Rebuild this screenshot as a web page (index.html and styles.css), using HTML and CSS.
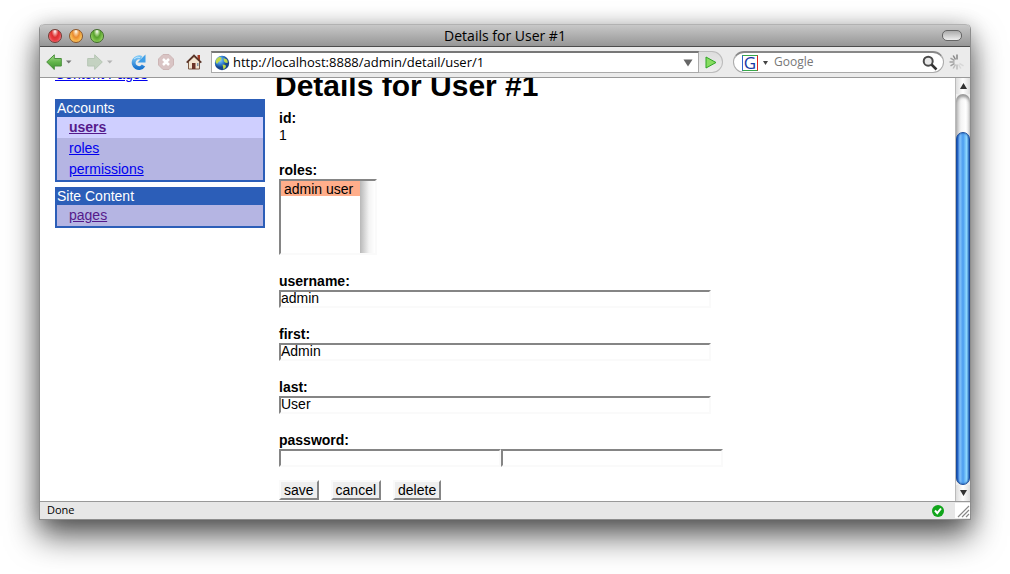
FILE: index.html
```html
<!DOCTYPE html>
<html lang="en">
<head>
<meta charset="utf-8">
<meta name="viewport" content="width=device-width, initial-scale=1">
<title>Details for User #1</title>
<link rel="stylesheet" href="styles.css">
</head>
<body>
<div class="window">
  <header class="titlebar">
    <div class="lights">
      <button class="light red" aria-label="Close"></button>
      <button class="light amber" aria-label="Minimize"></button>
      <button class="light green" aria-label="Zoom"></button>
    </div>
    <div class="title">Details for User #1</div>
    <button class="pill" aria-label="Toggle toolbar"></button>
  </header>

  <nav class="toolbar" aria-label="Navigation">
    <button class="tool arrow" aria-label="Back">
      <svg width="26" height="16" viewBox="0 0 26 16"><defs><linearGradient id="gr" x2="0" y2="1"><stop stop-color="#a5dc8a"/><stop offset=".5" stop-color="#63b54b"/><stop offset="1" stop-color="#3d9130"/></linearGradient></defs><path d="M.7 8 8.300.8V4.500h7v7.500h-7v3.500z" fill="url(#gr)" stroke="#4c8f3e"/><path d="M20 6.500h5.500l-2.750 3z" fill="#777"/></svg>
    </button>
    <button class="tool arrow faded" aria-label="Forward">
      <svg width="26" height="16" viewBox="0 0 26 16"><path d="M15.300 8 7.700.8V4.500h-7v7.500h7v3.500z" fill="#a5bea0" stroke="#8ca888"/><path d="M20 6.500h5.500l-2.750 3z" fill="#888"/></svg>
    </button>
    <button class="tool reload" aria-label="Reload">
      <svg width="16" height="16" viewBox="0 0 16 16"><defs><linearGradient id="bl" x2="0" y2="1"><stop stop-color="#77c4f4"/><stop offset="1" stop-color="#1c76d0"/></linearGradient></defs><path d="M11.500 4A5.300 5.300 0 1 0 13.500 11.500" fill="none" stroke="url(#bl)" stroke-width="4"/><path d="M15.500.5v8H7.500z" fill="#3f9fe8"/><path d="M4 5Q7 2 10 3.500" fill="none" stroke="#bfe6ff"/></svg>
    </button>
    <button class="tool stop" aria-label="Stop">
      <svg width="16" height="16" viewBox="0 0 16 16"><path d="M5 .5h6L15.500 5v6L11 15.500H5L.5 11V5z" fill="#d9c4c4" stroke="#cdb6b6"/><path d="m5 5 6 6m0-6-6 6" stroke="#fff" stroke-width="2.500"/></svg>
    </button>
    <button class="tool home" aria-label="Home">
      <svg width="16" height="16" viewBox="0 0 16 16"><path d="M11.500 1H14v5h-2.500z" fill="#a33b25"/><path d="M2.500 7.500 8 2.500l5.500 5v7.500h-11z" fill="#f3e5cf" stroke="#7d5b46"/><path d="M.7 8.700 8 1.500l7.300 7.200" fill="none" stroke="#593427" stroke-width="1.700"/><path d="M6 9h3.500v6H6z" fill="#6b3426"/><path d="M11 9h1.500v3H11z" fill="#8699a7"/></svg>
    </button>
    <div class="address">
      <svg width="16" height="16" viewBox="0 0 16 16" aria-hidden="true"><defs><radialGradient id="gl" cx=".35" cy=".3"><stop stop-color="#9bd4fa"/><stop offset=".6" stop-color="#3384d4"/><stop offset="1" stop-color="#17458c"/></radialGradient></defs><circle cx="8" cy="8" r="7.200" fill="url(#gl)"/><path d="M2.500 4 5 2l2.500.5L7 5 4.500 7 3 9 1.500 7zM9.500 3l3.500 1.500 1 3-2 .5-2-1.500zM8.500 9.500l3 .5.500 2-2.500 2.500z" fill="#bfd94a"/></svg>
      <input class="url" type="text" value="http://localhost:8888/admin/detail/user/1" aria-label="Address">
      <button class="history" aria-label="Show history"><svg width="10" height="8" viewBox="0 0 10 8"><path d="M.5.5h9L5 7.500z" fill="#666"/></svg></button>
    </div>
    <button class="go" aria-label="Go"><svg width="12" height="13" viewBox="0 0 12 13"><path d="M1 1v11l10-5.500z" fill="#87dc61" stroke="#2fa524"/></svg></button>
    <div class="search">
      <span class="engine" aria-hidden="true">G</span>
      <svg width="5" height="4" viewBox="0 0 5 4" aria-hidden="true"><path d="M0 0h5L2.500 4z" fill="#444"/></svg>
      <input class="query" type="text" placeholder="Google" aria-label="Search Google">
      <svg width="16" height="16" viewBox="0 0 16 16" aria-hidden="true"><circle cx="6.200" cy="6.200" r="4.500" fill="#e9e9e9" stroke="#4a4a4a" stroke-width="2"/><path d="m9.500 9.500 5 5" stroke="#333" stroke-width="2.500"/></svg>
    </div>
    <svg class="throbber" width="16" height="16" viewBox="0 0 16 16" stroke-width="1.500" aria-hidden="true"><g stroke="#858585"><path d="M8 .5v5"/><path d="M4.200 1.500 6.500 5.500"/></g><g stroke="#a2a2a2"><path d="m1.500 4.200 4 2.300"/><path d="M.5 8h5"/><path d="m1.500 11.800 4-2.300"/></g><g stroke="#bcbcbc"><path d="m4.200 14.500 2.300-4"/><path d="M8 15.500v-5"/></g><g stroke="#d8d8d8"><path d="m11.800 14.500-2.300-4"/><path d="m14.500 11.800-4-2.300"/></g></svg>
  </nav>

  <div class="viewport">
    <div class="page">
      <aside class="sidebar">
        <a class="top-link" href="#">Content Pages</a>
        <section class="menu">
          <h2>Accounts</h2>
          <ul>
            <li class="current"><a class="visited" href="#">users</a></li>
            <li><a href="#">roles</a></li>
            <li><a href="#">permissions</a></li>
          </ul>
        </section>
        <section class="menu">
          <h2>Site Content</h2>
          <ul>
            <li><a class="visited" href="#">pages</a></li>
          </ul>
        </section>
      </aside>
      <main class="main">
        <h1>Details for User #1</h1>
        <form class="form">
          <div class="field"><span class="label">id:</span><span class="value">1</span></div>
          <div class="field">
            <label class="label" for="roles">roles:</label>
            <div class="listbox">
              <select id="roles" size="4" multiple><option class="chosen">admin user</option></select>
              <span class="track"></span>
            </div>
          </div>
          <div class="field"><label class="label" for="username">username:</label><input class="text" id="username" type="text" value="admin"></div>
          <div class="field"><label class="label" for="first">first:</label><input class="text" id="first" type="text" value="Admin"></div>
          <div class="field"><label class="label" for="last">last:</label><input class="text" id="last" type="text" value="User"></div>
          <div class="field last-field">
            <label class="label" for="password">password:</label>
            <div class="pair"><input class="text" id="password" type="password"><input class="text" type="password" aria-label="Confirm password"></div>
          </div>
          <div class="actions">
            <button type="button">save</button>
            <button type="button">cancel</button>
            <button type="button">delete</button>
          </div>
        </form>
      </main>
    </div>
    <div class="scrollbar" aria-hidden="true">
      <span class="step"><svg width="7" height="6" viewBox="0 0 7 6"><path d="M0 6h7L3.500 0z" fill="#333"/></svg></span>
      <span class="groove"><span class="thumb"></span></span>
      <span class="step"><svg width="7" height="6" viewBox="0 0 7 6"><path d="M0 0h7L3.500 6z" fill="#333"/></svg></span>
    </div>
  </div>

  <footer class="status">
    <span>Done</span>
    <svg class="ok" width="12" height="12" viewBox="0 0 12 12" aria-hidden="true"><circle cx="6" cy="6" r="6" fill="#11a51b"/><path d="m3 5.500 2.300 2.700L9 3.500" fill="none" stroke="#fff" stroke-width="2"/></svg>
    <svg class="grip" width="15" height="15" viewBox="0 0 15 15" aria-hidden="true"><path d="M3 14 14 3M7 14l7-7m-3 7 3-3" stroke="#888" stroke-width="1.200"/></svg>
  </footer>
</div>
</body>
</html>
```
FILE: styles.css
```css
* { box-sizing: border-box; }
body {
  margin: 0;
  height: 100vh;
  padding: 24px 39px 54px;
  display: flex;
  background: #fff;
  overflow: hidden;
  font: 14px/18px "Liberation Sans", Arial, sans-serif;
  color: #000;
}
button, input, select { font: inherit; color: inherit; margin: 0; padding: 0; border: 0; border-radius: 0; }
button { background: none; }
svg { display: block; flex: none; }
.window {
  flex: 1;
  min-width: 0;
  display: flex;
  flex-direction: column;
  border: solid #8d8d8d;
  border-width: 0 1px 1px;
  border-radius: 5px 5px 0 0;
  box-shadow: 0 16px 32px rgba(0, 0, 0, .65), 0 2px 20px rgba(0, 0, 0, .2);
}
.titlebar {
  height: 23px;
  flex: none;
  display: grid;
  grid-template-columns: 1fr auto 1fr;
  align-items: center;
  padding: 0 8px;
  border-top: 1px solid #b2b2b2;
  border-bottom: 1px solid #4c4c4c;
  border-radius: 5px 5px 0 0;
  background: linear-gradient(#c8c8c8, #969696);
  font: 14px/20px "Open Sans", sans-serif;
}
.lights { display: flex; gap: 7px; }
.light { width: 14px; height: 14px; border: 1px solid #713a33; border-radius: 50%; }
.red { background: radial-gradient(ellipse at 50% 12%, #fff 0, #f4aaa8 15%, #dc2f30 40%, #e93c43 60%, #ffabae 100%); }
.amber { border-color: #8b5528; background: radial-gradient(ellipse at 50% 12%, #fff 0, #f9d3a1 15%, #e98a2f 40%, #f6ad45 60%, #ffe889 100%); }
.green { border-color: #3f6a29; background: radial-gradient(ellipse at 50% 12%, #fff 0, #c0e0a3 15%, #58a02d 40%, #74bb43 60%, #c5f294 100%); }
.pill { width: 20px; height: 11px; justify-self: end; border: 1px solid #666; border-radius: 5px; background: linear-gradient(#aaa, #eee); }
.toolbar {
  height: 31px;
  flex: none;
  display: flex;
  align-items: center;
  padding: 0 5px 0 6px;
  border-bottom: 1px solid #999;
  background: #ebebeb;
  font: 13px/16px "Open Sans", sans-serif;
}
.tool { flex: none; margin-right: 12px; }
.arrow { margin-right: 15px; }
.faded { opacity: .55; margin-right: 17px; }
.home { margin-right: 9px; }
.address {
  flex: 1;
  min-width: 0;
  height: 22px;
  display: flex;
  align-items: center;
  padding: 0 5px 0 2px;
  border: 1px solid #aaa;
  border-top: 2px solid #777;
  background: #fff;
}
.url { flex: 1; min-width: 0; padding: 0 0 2px 3px; background: none; outline: 0; }
.go { width: 24px; height: 22px; flex: none; padding-left: 6px; border: 1px solid #bbb; border-left: 0; border-radius: 0 11px 11px 0; background: linear-gradient(#ddd, #eee); }
.search {
  width: 211px;
  height: 22px;
  flex: none;
  display: flex;
  align-items: center;
  margin: 0 5px 0 10px;
  padding: 0 5px 0 8px;
  border: 1px solid #aaa;
  border-top: 2px solid #888;
  border-radius: 11px;
  background: #fff;
}
.engine { width: 16px; height: 16px; margin-right: 5px; border: 1px solid; border-color: #39a84a #d22 #39a84a #36c; color: #1736a5; font: 17px/14px "Open Sans", sans-serif; text-align: center; }
.query { flex: 1; min-width: 0; padding: 0 0 2px 6px; background: none; outline: 0; font-size: 12px; }
.query::placeholder { color: #777; opacity: 1; }
.viewport { flex: 1; min-height: 0; display: flex; overflow: hidden; background: #fff; }
.page { flex: 1; min-width: 0; display: flex; gap: 10px; margin-top: -13px; padding-left: 15px; }
.sidebar { width: 210px; flex: none; }
a { color: #00e; }
a.visited { color: #551a8b; }
.top-link { display: block; margin-bottom: 16px; }
.menu { margin-bottom: 5px; border: 2px solid #2c5eb8; border-top: 0; background: #b5b5e3; }
.menu h2 { margin: 0; height: 18px; background: #2c5eb8; color: #fff; font-size: 14px; line-height: 18px; font-weight: 400; }
.menu ul { margin: 0; padding: 0; list-style: none; }
.menu li { height: 21px; padding-left: 12px; line-height: 20px; }
.menu .current { background: #cfcfff; font-weight: 700; }
.main { flex: 1; min-width: 0; }
h1 { margin: 3px 0 5px; font-size: 30px; line-height: 36px; }
.form { padding-left: 4px; }
.field { margin-bottom: 17px; }
.label, .value { display: block; height: 18px; line-height: 18px; }
.label { font-weight: 700; }
.value { height: 17px; line-height: 16px; }
.text, .listbox { border: 2px solid; border-color: #858585 #fafafa #fafafa #858585; background: #fff; outline: 0; }
.text { display: block; width: 432px; max-width: 100%; height: 18px; padding-bottom: 2px; }
.listbox { display: flex; width: 98px; height: 76px; }
.listbox select { flex: 1; min-width: 0; overflow: hidden; background: #fff; outline: 0; }
.listbox option { height: 15px; min-height: 15px; padding: 0 3px; line-height: 14px; }
.listbox .chosen { background: #ffae8b; color: #000; }
.track { width: 15px; background: linear-gradient(90deg, #b8b8b8, #f3f3f3 60%, #fff); }
.pair { display: flex; }
.pair .text { width: 222px; }
.last-field { margin-bottom: 13px; }
.actions { display: flex; gap: 12px; }
.actions button { height: 20px; padding: 0 3px; border: 2px solid; border-color: #fafafa #858585 #858585 #fafafa; background: #eee; line-height: 16px; }
.scrollbar { width: 15px; flex: none; display: flex; flex-direction: column; border-left: 1px solid #bbb; background: #eee; }
.step { height: 16px; flex: none; display: flex; align-items: center; justify-content: center; background: linear-gradient(90deg, #ddd, #fff, #ddd); }
.groove { flex: 1; min-height: 0; padding-top: 38px; border-radius: 7px; background: linear-gradient(90deg, #bbb, #f4f4f4 35%, #fff 70%, #ddd); box-shadow: inset 0 3px 3px #999; }
.thumb { display: block; height: 100%; border: 1px solid #174b9c; border-radius: 7px; background: linear-gradient(90deg, #1250c0, #83c3fa 25%, #4a9cf0 50%, #8ed8ff 80%, #3c7dc8); box-shadow: inset 0 0 2px #124a9e; }
.status { height: 18px; flex: none; display: flex; align-items: center; padding-left: 7px; border-top: 1px solid #999; background: #e7e7e7; font: 11px/16px "Open Sans", sans-serif; }
.status span { padding-bottom: 2px; }
.ok { margin-left: auto; margin-right: 11px; }
.grip { background: #fff; }
```
